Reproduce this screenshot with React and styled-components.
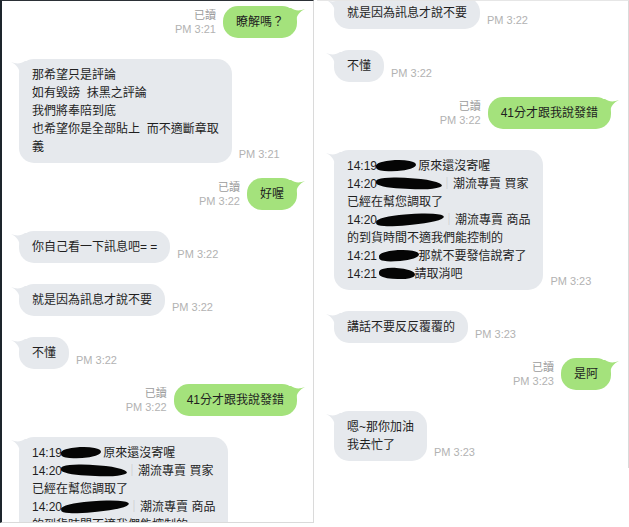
import React from "react";
import styled, { createGlobalStyle } from "styled-components";

const GlobalStyle = createGlobalStyle`
	html, body {
		margin: 0;
		padding: 0;
		background: #ffffff;
	}
	body {
		font-family: "Liberation Sans", "Noto Sans CJK TC", sans-serif;
	}
`;

const Page = styled.div`
	display: flex;
	align-items: flex-start;
	width: 629px;
	height: 527px;
	overflow: hidden;
`;

const LeftPanel = styled.div`
	box-sizing: border-box;
	width: 314px;
	height: 523px;
	flex-shrink: 0;
	overflow: hidden;
	background: #ffffff;
	border-left: 2px solid #1d252c;
	border-top: 1px solid #2b3036;
	border-right: 1px solid #dadada;
	border-bottom: 1px solid #dadada;
	padding: 5px 16px 0 17px;
`;

const RightPanel = styled.div`
	box-sizing: border-box;
	width: 312px;
	height: 468px;
	margin-left: 3px;
	flex-shrink: 0;
	overflow: hidden;
	background: #ffffff;
	border-top: 1px solid #e6e6e6;
	border-right: 1px solid #dadada;
	padding: 5px 17px 0 17px;
`;

const Feed = styled.div`
	display: flex;
	flex-direction: column;
	margin-top: ${(p) => -p.$offset}px;
`;

const Row = styled.div`
	display: flex;
	align-items: flex-end;
	justify-content: ${(p) => (p.$mine ? "flex-end" : "flex-start")};
	margin-top: ${(p) => (p.$mine ? 15 : 21)}px;

	&:first-child {
		margin-top: 0;
	}
`;

const Bubble = styled.div`
	position: relative;
	flex-shrink: 0;
	background: ${(p) => (p.$mine ? "#a4e27c" : "#e6e9ed")};
	color: #1f1f1f;
	border-radius: 15px;
	padding: 7px 13px;

	svg {
		fill: ${(p) => (p.$mine ? "#a4e27c" : "#e6e9ed")};
	}
`;

const TailSvg = styled.svg`
	position: absolute;
	top: 2px;
	${(p) => (p.$mine ? "right: -8px;" : "left: -8px;")}
	transform: ${(p) => (p.$mine ? "scaleX(-1)" : "none")};
`;

const Text = styled.div`
	position: relative;
	font-size: 12px;
	line-height: 18px;
	white-space: pre;
`;

const Line = styled.div`
	white-space: pre;
`;

const Ink = styled.span`
	display: inline-block;
	width: ${(p) => p.$w}px;
	height: 11px;
	margin: 0 -1px;
	vertical-align: -1px;
	background: #050505;
	border-radius: 45% 55% 50% 40%;
	transform: rotate(${(p) => p.$tilt}deg);
`;

const Pipe = styled.span`
	color: #c4c4c4;
`;

const Meta = styled.div`
	display: flex;
	flex-direction: column;
	align-items: ${(p) => (p.$mine ? "flex-end" : "flex-start")};
	flex-shrink: 0;
	margin: 0 7px 2px;
`;

const Read = styled.div`
	font-size: 11px;
	line-height: 14px;
	color: #9c9c9c;
`;

const Time = styled.div`
	font-size: 11px;
	line-height: 14px;
	color: #b2b2b2;
`;

const Blot = ({ w, tilt = 0 }) => <Ink $w={w} $tilt={tilt} />;

const Bar = () => <Pipe>｜</Pipe>;

const messages = [
	{ mine: true, body: "瞭解嗎？", time: "PM 3:21" },
	{
		mine: false,
		body: "那希望只是評論\n如有毀謗  抹黑之評論\n我們將奉陪到底\n也希望你是全部貼上  而不適斷章取\n義",
		time: "PM 3:21",
	},
	{ mine: true, body: "好喔", time: "PM 3:22" },
	{ mine: false, body: "你自己看一下訊息吧= =", time: "PM 3:22" },
	{ mine: false, body: "就是因為訊息才說不要", time: "PM 3:22" },
	{ mine: false, body: "不懂", time: "PM 3:22" },
	{ mine: true, body: "41分才跟我說發錯", time: "PM 3:22" },
	{
		mine: false,
		body: (
			<>
				<Line>14:19<Blot w={40} tilt={-3} /> 原來還沒寄喔</Line>
				<Line>14:20<Blot w={66} tilt={3} /><Bar />潮流專賣 買家</Line>
				<Line>已經在幫您調取了</Line>
				<Line>14:20<Blot w={68} tilt={-5} /><Bar />潮流專賣 商品</Line>
				<Line>的到貨時間不適我們能控制的</Line>
				<Line>14:21 <Blot w={40} tilt={-4} />那就不要發信說寄了</Line>
				<Line>14:21 <Blot w={36} tilt={3} />請取消吧</Line>
			</>
		),
		time: "PM 3:23",
	},
	{ mine: false, body: "講話不要反反覆覆的", time: "PM 3:23" },
	{ mine: true, body: "是阿", time: "PM 3:23" },
	{ mine: false, body: "嗯~那你加油\n我去忙了", time: "PM 3:23" },
];

const Tail = ({ mine }) => (
	<TailSvg $mine={mine} viewBox="0 0 16 14" width="16" height="14">
		<path d="M0 1 C5 3 10 3 14 0 L16 0 L16 14 L9 14 C9 8 5 3 0 1 Z" />
	</TailSvg>
);

const Message = ({ mine, body, time }) => (
	<Row $mine={mine}>
		{mine && (
			<Meta $mine>
				<Read>已讀</Read>
				<Time>{time}</Time>
			</Meta>
		)}
		<Bubble $mine={mine}>
			<Tail mine={mine} />
			<Text>{body}</Text>
		</Bubble>
		{!mine && (
			<Meta>
				<Time>{time}</Time>
			</Meta>
		)}
	</Row>
);

const Chat = ({ offset }) => (
	<Feed $offset={offset}>
		{messages.map((m, i) => (
			<Message key={i} {...m} />
		))}
	</Feed>
);

const App = () => {
	return (
		<>
			<GlobalStyle />
			<Page>
				<LeftPanel>
					<Chat offset={0} />
				</LeftPanel>
				<RightPanel>
					<Chat offset={287} />
				</RightPanel>
			</Page>
		</>
	);
};

export default App;
